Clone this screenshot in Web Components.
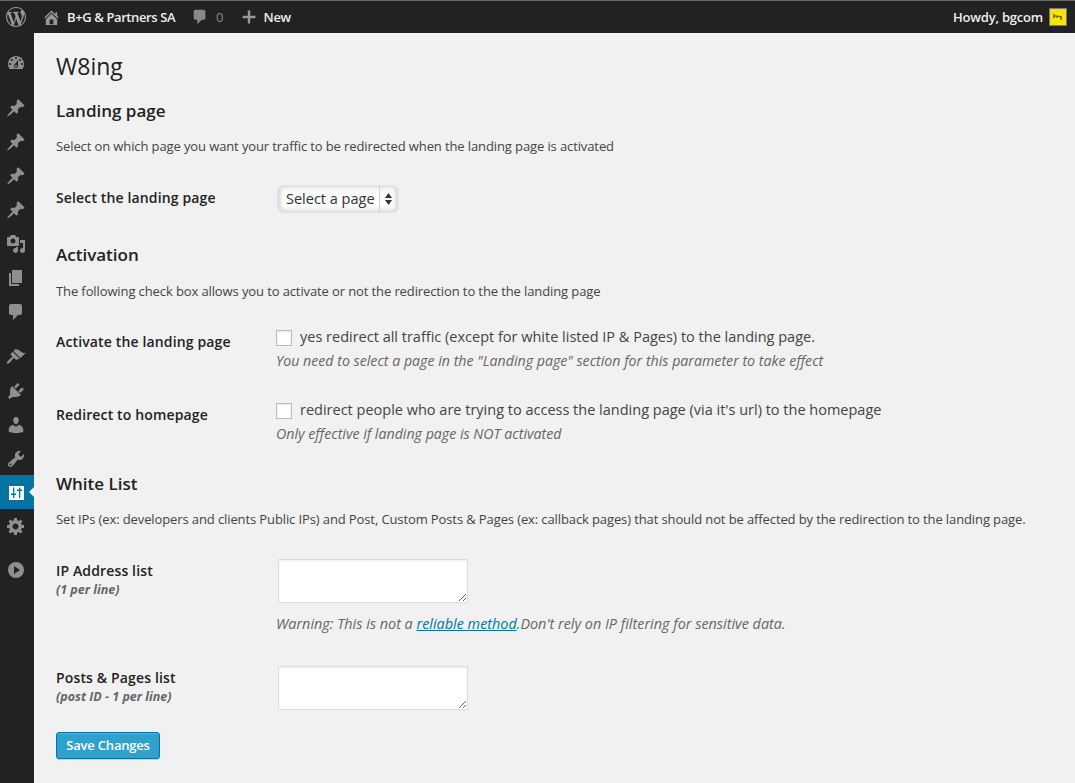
<!DOCTYPE html>
<html lang="en">
<head>
<meta charset="utf-8">
<title>W8ing</title>
<style>
    html, body { margin: 0; padding: 0; height: 100%; background: #f1f1f1; }
    body { font-family: "Open Sans", sans-serif; font-size: 13px; color: #444; overflow: hidden; }
    .shell { display: flex; height: 750px; }
</style>
</head>
<body>
<wp-admin-bar site="B+G &amp; Partners SA" user="bgcom"></wp-admin-bar>
<div class="shell">
    <wp-side-menu></wp-side-menu>
    <wp-page heading="W8ing">
        <wp-section heading="Landing page" text="Select on which page you want your traffic to be redirected when the landing page is activated" gap="30" style="--section-top:17px">
            <wp-row label="Select the landing page" style="--label-top:3px"><mac-select value="Select a page"></mac-select></wp-row>
        </wp-section>
        <wp-section heading="Activation" text="The following check box allows you to activate or not the redirection to the the landing page" gap="27" style="--text-top:16px">
            <wp-row label="Activate the landing page" style="--label-top:5px">
                <wp-check>yes redirect all traffic (except for white listed IP &amp; Pages) to the landing page.</wp-check>
                <wp-note>You need to select a page in the "Landing page" section for this parameter to take effect</wp-note>
            </wp-row>
            <wp-row label="Redirect to homepage" style="--label-top:5px;--row-top:30px">
                <wp-check>redirect people who are trying to access the landing page (via it's url) to the homepage</wp-check>
                <wp-note>Only effective if landing page is NOT activated</wp-note>
            </wp-row>
        </wp-section>
        <wp-section heading="White List" text="Set IPs (ex: developers and clients Public IPs) and Post, Custom Posts &amp; Pages (ex: callback pages) that should not be affected by the redirection to the landing page." gap="31" style="--section-top:29px">
            <wp-row label="IP Address list" sub="(1 per line)" style="--label-top:2px">
                <wp-area></wp-area>
                <wp-note style="--note-top:11px;--note-size:14.4px">Warning: This is not a <a href="#" style="color:#0074a2">reliable method</a>.Don't rely on IP filtering for sensitive data.</wp-note>
            </wp-row>
            <wp-row label="Posts &amp; Pages list" sub="(post ID - 1 per line)" style="--label-top:2px;--row-top:33px">
                <wp-area></wp-area>
            </wp-row>
        </wp-section>
        <wp-button>Save Changes</wp-button>
    </wp-page>
</div>

<script>
// dashicons style paths, all on a 20x20 box
const ICONS = {
    wp: 'M20 10c0-5.51-4.49-10-10-10C4.48 0 0 4.49 0 10c0 5.52 4.48 10 10 10 5.51 0 10-4.48 10-10zM7.78 15.37L4.37 6.22c.55-.02 1.17-.08 1.17-.08.5-.06.44-1.13-.06-1.11 0 0-1.45.11-2.37.11-.18 0-.37 0-.58-.01C4.12 2.69 6.87 1.11 10 1.11c2.33 0 4.45.87 6.05 2.34-.68-.11-1.65.39-1.65 1.58 0 .74.45 1.36.9 2.1.35.61.55 1.36.55 2.46 0 1.49-1.4 5-1.4 5l-3.03-8.37c.54-.02.82-.17.82-.17.5-.05.44-1.25-.06-1.22 0 0-1.44.12-2.38.12-.87 0-2.33-.12-2.33-.12-.5-.03-.56 1.2-.06 1.22l.92.08 1.26 3.41zM17.41 10c.24-.64.74-1.87.43-4.25.7 1.29 1.05 2.71 1.05 4.25 0 3.29-1.73 6.24-4.4 7.78.97-2.59 1.94-5.2 2.92-7.78zM6.1 18.09C3.12 16.65 1.11 13.53 1.11 10c0-1.3.23-2.48.72-3.59C3.25 10.3 4.67 14.2 6.1 18.09zm4.03-6.63l2.58 6.98c-.86.29-1.76.45-2.71.45-.79 0-1.57-.11-2.29-.33.81-2.38 1.62-4.74 2.42-7.1z',
    home: 'M16 8.5l1.53 1.53-1.06 1.06L10 4.62l-6.47 6.47-1.06-1.06L10 2.5l4 4v-2h2v4zm-6-2.46l6 5.99V18H4v-5.97zM12 17v-5H8v5h4z',
    comment: 'M5 2h9c1.1 0 2 .9 2 2v7c0 1.1-.9 2-2 2h-2l-5 5v-5H5c-1.1 0-2-.9-2-2V4c0-1.1.9-2 2-2z',
    plus: 'M18 8.500v3h-6.500V18h-3v-6.500H2v-3h6.500V2h3v6.500z',
    dashboard: 'M3.76 16h12.48c1.1-1.37 1.76-3.11 1.76-5 0-4.42-3.58-8-8-8s-8 3.58-8 8c0 1.89.66 3.63 1.76 5zM10 4c.55 0 1 .45 1 1s-.45 1-1 1-1-.45-1-1 .45-1 1-1zM6 6c.55 0 1 .45 1 1s-.45 1-1 1-1-.45-1-1 .45-1 1-1zm8 0c.55 0 1 .45 1 1s-.45 1-1 1-1-.45-1-1 .45-1 1-1zm-5.37 5.55L12 7v6c0 1.1-.9 2-2 2s-2-.9-2-2c0-.57.24-1.08.63-1.45zM4 10c.55 0 1 .45 1 1s-.45 1-1 1-1-.45-1-1 .45-1 1-1zm12 0c.55 0 1 .45 1 1s-.45 1-1 1-1-.45-1-1 .45-1 1-1zm-5 3c0-.55-.45-1-1-1s-1 .45-1 1 .45 1 1 1 1-.45 1-1z',
    pin: 'M10.44 3.02l1.82-1.82 6.36 6.35-1.83 1.82c-1.05-.68-2.48-.57-3.41.36l-.75.75c-.92.93-1.04 2.35-.35 3.41l-1.83 1.82-2.41-2.41-2.8 2.79c-.42.42-3.38 2.71-3.8 2.29s1.86-3.39 2.28-3.81l2.79-2.79L4.1 9.36l1.83-1.82c1.05.69 2.48.57 3.4-.36l.75-.75c.93-.92 1.05-2.35.36-3.41z',
    media: 'M13 11V4c0-.55-.45-1-1-1h-1.67L9 1H5L3.67 3H2c-.55 0-1 .45-1 1v7c0 .55.45 1 1 1h10c.55 0 1-.45 1-1zM7 4.5c1.38 0 2.5 1.12 2.5 2.5S8.38 9.5 7 9.5 4.5 8.38 4.5 7 5.62 4.5 7 4.5zM14 6h5v10.5c0 1.38-1.12 2.5-2.5 2.5S14 17.88 14 16.5s1.12-2.5 2.5-2.5c.17 0 .34.02.5.05V9h-3V6zm-4 8.05V13h2v3.5c0 1.38-1.12 2.5-2.5 2.5S7 17.88 7 16.5 8.12 14 9.5 14c.17 0 .34.02.5.05z',
    page: 'M6 15V2h10v13H6zm-1 1h8v2H3V5h2v11z',
    appearance: 'M14.48 11.06L7.41 3.99l1.5-1.5c.5-.56 2.3-.47 3.51.32 1.21.8 1.43 1.28 2.91 2.1 1.18.64 2.45 1.26 4.45.85zm-.71.71L6.7 4.7 4.93 6.47c-.39.39-.39 1.02 0 1.41l1.06 1.06c.39.39.39 1.03 0 1.42-.6.6-1.43 1.11-2.21 1.69-.35.26-.7.53-1.01.84-1.33 1.33-2.36 2.85-1.66 3.55.71.7 2.22-.33 3.55-1.66.3-.31.58-.66.83-1.01.58-.78 1.09-1.61 1.69-2.21.39-.39 1.03-.39 1.42 0l1.06 1.06c.39.39 1.02.39 1.41 0z',
    plugin: 'M13.11 4.36L9.87 7.6 8 5.73l3.24-3.24c.35-.34 1.05-.2 1.56.32.52.51.66 1.21.31 1.55zm-8 1.77l.91-1.12 9.01 9.01-1.19.84c-.71.71-2.63 1.16-3.82 1.16H6.14L4.9 17.26c-.59.59-1.54.59-2.12 0-.59-.58-.59-1.53 0-2.12l1.24-1.24v-3.88c0-1.13.4-3.19 1.09-3.89zm7.26 3.97l3.24-3.24c.34-.35 1.04-.21 1.55.31.52.51.66 1.21.31 1.55l-3.24 3.25z',
    users: 'M10 9.25c-2.27 0-2.73-3.44-2.73-3.44C7 4.02 7.82 2 9.97 2c2.16 0 2.98 2.02 2.71 3.81 0 0-.41 3.44-2.68 3.44zm0 2.57L12.72 10c2.39 0 4.52 2.33 4.52 4.53v2.49s-3.65 1.13-7.24 1.13c-3.65 0-7.24-1.13-7.24-1.13v-2.49c0-2.25 1.94-4.48 4.47-4.48z',
    tools: 'M16.68 9.77c-1.34 1.34-3.3 1.67-4.95.99l-5.41 6.52c-.99.99-2.59.99-3.58 0s-.99-2.59 0-3.57l6.52-5.42c-.68-1.65-.35-3.61.99-4.95 1.28-1.28 3.12-1.62 4.72-1.06l-2.89 2.89 2.82 2.82 2.86-2.87c.53 1.58.18 3.39-1.08 4.65zM3.81 16.21c.4.39 1.04.39 1.43 0 .4-.4.4-1.04 0-1.43-.39-.4-1.03-.4-1.43 0-.39.39-.39 1.03 0 1.43z',
    settings: 'M18 12h-2.18c-.17.7-.44 1.35-.81 1.93l1.54 1.54-2.1 2.1-1.54-1.54c-.58.36-1.23.63-1.91.79V19H8v-2.18c-.68-.16-1.33-.43-1.91-.79l-1.54 1.54-2.12-2.12 1.54-1.54c-.36-.58-.63-1.23-.79-1.91H1V9.03h2.17c.16-.7.44-1.35.8-1.94L2.43 5.55l2.1-2.1 1.54 1.54c.58-.37 1.24-.64 1.93-.81V2h3v2.18c.68.16 1.33.43 1.91.79l1.54-1.54 2.12 2.12-1.54 1.54c.36.59.64 1.24.8 1.94H18V12zm-8.5 1.5c1.66 0 3-1.34 3-3s-1.34-3-3-3-3 1.34-3 3 1.34 3 3 3z',
    play: 'M10 2a8 8 0 1 0 0 16 8 8 0 0 0 0-16zM8 6l6 4-6 4z',
    // white tile with two blue sliders cut out of it
    sliders: 'M3 4h15v14H3zM7 5.500v6H5V13h2v3h1.300v-3H10v-1.500H8.300v-6zM13 5.500v2h-2V9h2v7h1.300V9H16V7.500h-1.700v-2z'
};

function svgIcon(name, size, color) {
    return `<svg width="${size}" height="${size}" viewBox="0 0 20 20" fill="${color}" fill-rule="evenodd"><path d="${ICONS[name]}"/></svg>`;
}

class WpAdminBar extends HTMLElement {
    constructor() {
        super();
        this.attachShadow({ mode: 'open' });
    }
    connectedCallback() {
        const site = this.getAttribute('site');
        const user = this.getAttribute('user');
        this.shadowRoot.innerHTML = `
            <style>
                :host {
                    display: flex;
                    align-items: center;
                    height: 32px;
                    padding-right: 8px;
                    background: #222;
                    border-top: 1px solid #666;
                    font: 600 13px/32px "Open Sans", sans-serif;
                    color: #eee;
                }
                .item { display: flex; align-items: center; }
                .wp { margin-left: 6px; width: 20px; }
                .home { margin-left: 16px; }
                .home span { margin-left: 6px; letter-spacing: -0.4px; }
                .comments { margin-left: 16px; color: #888; font-weight: 400; }
                .comments span { margin-left: 7px; }
                .new { margin-left: 17px; }
                .new span { margin-left: 7px; letter-spacing: -0.3px; }
                .howdy { margin-left: auto; letter-spacing: -0.2px; }
                .avatar {
                    width: 18px;
                    height: 18px;
                    margin-left: 6px;
                    box-sizing: border-box;
                    border: 1px solid #777;
                    background: #f6e20c;
                    display: flex;
                    align-items: center;
                    justify-content: center;
                }
            </style>
            <div class="item wp">${svgIcon('wp', 20, '#999')}</div>
            <div class="item home">${svgIcon('home', 19, '#999')}<span>${site}</span></div>
            <div class="item comments">${svgIcon('comment', 18, '#888')}<span>0</span></div>
            <div class="item new">${svgIcon('plus', 16, '#999')}<span>New</span></div>
            <div class="item howdy">Howdy, ${user}</div>
            <div class="avatar"><svg width="10" height="8" viewBox="0 0 10 8" fill="none" stroke="#554d10" stroke-width="1.200"><path d="M1 1v4M1 3h3v2M5 3l3 1v3M8 4h1"/></svg></div>
        `;
    }
}

class WpSideMenu extends HTMLElement {
    constructor() {
        super();
        this.attachShadow({ mode: 'open' });
    }
    connectedCallback() {
        // [icon, margin above]; the bigger margins are the menu separators
        const rows = [
            ['dashboard', 13], ['pin', 11], ['pin'], ['pin'], ['pin'],
            ['media'], ['page'], ['comment'],
            ['appearance', 11], ['plugin'], ['users'], ['tools'],
            ['sliders', -1, true], ['settings'], ['play', 10]
        ];
        const items = rows.map(([name, top, active]) => `
            <div class="row ${active ? 'active' : ''}" style="margin-top:${top || 0}px">
                ${svgIcon(name, 20, active ? '#fff' : '#8f8f8f')}
            </div>`).join('');
        this.shadowRoot.innerHTML = `
            <style>
                :host {
                    display: block;
                    flex: none;
                    width: 34px;
                    background: #222;
                }
                .row {
                    position: relative;
                    display: flex;
                    align-items: center;
                    justify-content: center;
                    padding-right: 2px;
                    box-sizing: border-box;
                    width: 34px;
                    height: 34px;
                }
                .active { background: #0074a2; }
                .active::after {
                    content: "";
                    position: absolute;
                    right: 0;
                    top: 12px;
                    border: 5px solid transparent;
                    border-right-color: #f1f1f1;
                    border-left-width: 0;
                }
            </style>
            ${items}
        `;
    }
}

class WpPage extends HTMLElement {
    constructor() {
        super();
        this.attachShadow({ mode: 'open' });
    }
    connectedCallback() {
        this.shadowRoot.innerHTML = `
            <style>
                :host {
                    display: block;
                    flex: 1;
                    min-width: 0;
                    padding: 0 22px;
                }
                h2 {
                    margin: 17px 0 0;
                    font: 400 23px/32px "Open Sans", sans-serif;
                    color: #222;
                }
            </style>
            <h2>${this.getAttribute('heading')}</h2>
            <slot></slot>
        `;
    }
}

class WpSection extends HTMLElement {
    constructor() {
        super();
        this.attachShadow({ mode: 'open' });
    }
    connectedCallback() {
        const gap = this.getAttribute('gap') || 20;
        this.shadowRoot.innerHTML = `
            <style>
                :host { display: block; margin-top: var(--section-top, 30px); }
                h3 {
                    margin: 0;
                    font: 600 17px/24px "Open Sans", sans-serif;
                    color: #222;
                }
                p {
                    margin: var(--text-top, 15px) 0 ${gap}px;
                    font: 400 13px/17px "Open Sans", sans-serif;
                    letter-spacing: -0.11px;
                    color: #444;
                }
            </style>
            <h3>${this.getAttribute('heading')}</h3>
            <p>${this.getAttribute('text')}</p>
            <slot></slot>
        `;
    }
}

class WpRow extends HTMLElement {
    constructor() {
        super();
        this.attachShadow({ mode: 'open' });
    }
    connectedCallback() {
        const sub = this.getAttribute('sub');
        this.shadowRoot.innerHTML = `
            <style>
                :host {
                    display: grid;
                    grid-template-columns: 220px 1fr;
                    margin-top: var(--row-top, 0);
                }
                .label {
                    padding-top: var(--label-top, 0);
                    font: 600 14px/19px "Open Sans", sans-serif;
                    letter-spacing: 0.14px;
                    color: #222;
                }
                .sub {
                    margin-top: 1px;
                    font: italic 700 12.5px/17px "Open Sans", sans-serif;
                    letter-spacing: 0;
                    color: #666;
                }
            </style>
            <div class="label">${this.getAttribute('label')}${sub ? `<div class="sub">${sub}</div>` : ''}</div>
            <div><slot></slot></div>
        `;
    }
}

class MacSelect extends HTMLElement {
    constructor() {
        super();
        this.attachShadow({ mode: 'open' });
    }
    connectedCallback() {
        this.shadowRoot.innerHTML = `
            <style>
                :host {
                    display: inline-flex;
                    align-items: stretch;
                    height: 28px;
                    margin-left: 1px;
                    box-sizing: border-box;
                    border: 1px solid #e4e4e4;
                    border-radius: 6px;
                    background: linear-gradient(#ececec, #f9f9f9 20%, #fdfdfd 75%, #e8e8e8);
                    box-shadow: inset 3px 0 3px #ddd, inset -3px 0 3px #ddd;
                    font: 400 14.5px/26px "Open Sans", sans-serif;
                    color: #333;
                }
                .value { padding: 0 4px 0 8px; border-right: 1px solid #d0d0d0; }
                .arrows { display: flex; align-items: center; width: 18px; justify-content: center; }
            </style>
            <div class="value">${this.getAttribute('value')}</div>
            <div class="arrows"><svg width="7" height="12" viewBox="0 0 7 12" fill="#333"><path d="M3.500 0L7 5H0zM0 7h7l-3.500 5z"/></svg></div>
        `;
    }
}

class WpCheck extends HTMLElement {
    constructor() {
        super();
        this.attachShadow({ mode: 'open' });
    }
    connectedCallback() {
        this.shadowRoot.innerHTML = `
            <style>
                :host {
                    display: flex;
                    align-items: center;
                    font: 400 14.5px/19px "Open Sans", sans-serif;
                    color: #444;
                }
                input {
                    appearance: none;
                    width: 16px;
                    height: 16px;
                    margin: 0 8px 0 0;
                    position: relative;
                    top: 1px;
                    background: #fff;
                    border: 1px solid #bbb;
                    box-shadow: inset 0 1px 2px rgba(0,0,0,.1);
                }
            </style>
            <input type="checkbox"><span><slot></slot></span>
        `;
    }
}

class WpNote extends HTMLElement {
    constructor() {
        super();
        this.attachShadow({ mode: 'open' });
    }
    connectedCallback() {
        this.shadowRoot.innerHTML = `
            <style>
                :host {
                    display: block;
                    margin-top: var(--note-top, 5px);
                    font: italic 400 var(--note-size, 14.2px)/19px "Open Sans", sans-serif;
                    color: #666;
                }
            </style>
            <slot></slot>
        `;
    }
}

class WpArea extends HTMLElement {
    constructor() {
        super();
        this.attachShadow({ mode: 'open' });
    }
    connectedCallback() {
        this.shadowRoot.innerHTML = `
            <style>
                :host { display: block; padding-left: 2px; }
                textarea {
                    display: block;
                    box-sizing: border-box;
                    width: 190px;
                    height: 44px;
                    margin: 0;
                    background: #fff;
                    border: 1px solid #ddd;
                    border-radius: 0;
                    box-shadow: inset 0 1px 2px rgba(0,0,0,.07);
                }
            </style>
            <textarea></textarea>
        `;
    }
}

class WpButton extends HTMLElement {
    constructor() {
        super();
        this.attachShadow({ mode: 'open' });
    }
    connectedCallback() {
        this.shadowRoot.innerHTML = `
            <style>
                :host { display: block; margin-top: 22px; }
                button {
                    display: block;
                    width: 104px;
                    height: 27px;
                    padding: 0;
                    background: #2ea2cc;
                    border: 1px solid #0074a2;
                    border-radius: 3px;
                    box-shadow: inset 0 1px 0 rgba(120,200,230,.5), 0 1px 0 rgba(0,0,0,.15);
                    font: 600 13px/25px "Open Sans", sans-serif;
                    letter-spacing: -0.2px;
                    color: #fff;
                }
            </style>
            <button type="button"><slot></slot></button>
        `;
    }
}

customElements.define('wp-admin-bar', WpAdminBar);
customElements.define('wp-side-menu', WpSideMenu);
customElements.define('wp-page', WpPage);
customElements.define('wp-section', WpSection);
customElements.define('wp-row', WpRow);
customElements.define('mac-select', MacSelect);
customElements.define('wp-check', WpCheck);
customElements.define('wp-note', WpNote);
customElements.define('wp-area', WpArea);
customElements.define('wp-button', WpButton);
</script>
</body>
</html>
